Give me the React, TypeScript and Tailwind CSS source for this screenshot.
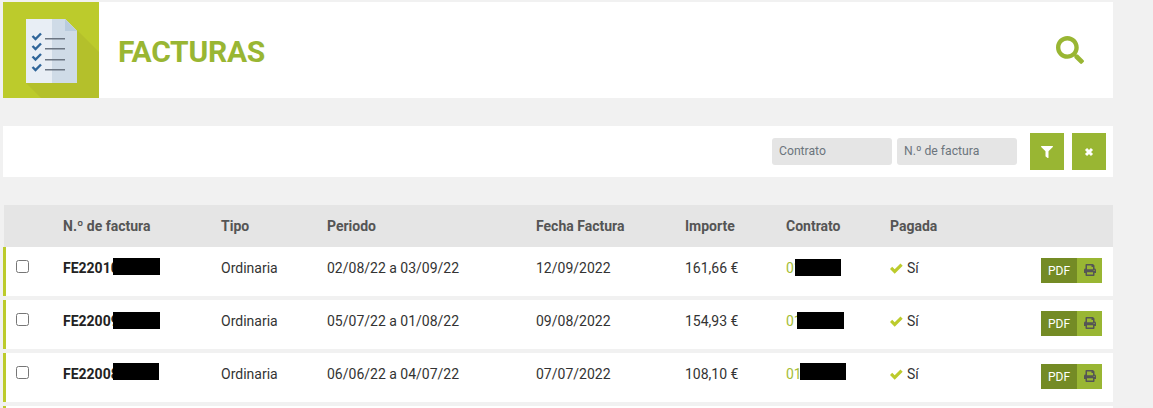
import { FaSearch, FaFilter, FaPrint } from "react-icons/fa";

interface Invoice {
  numero: string;
  periodo: string;
  fecha: string;
  importe: string;
  contrato: string;
  numeroTape: string;
  contratoTape: string;
}

const invoices: Invoice[] = [
  {
    numero: "FE22010",
    periodo: "02/08/22 a 03/09/22",
    fecha: "12/09/2022",
    importe: "161,66 €",
    contrato: "01",
    numeroTape: "left-[107px] top-[11px] h-[17px] w-[47px]",
    contratoTape: "left-[789px] top-[12px] h-[17px] w-[46px]",
  },
  {
    numero: "FE22009",
    periodo: "05/07/22 a 01/08/22",
    fecha: "09/08/2022",
    importe: "154,93 €",
    contrato: "01",
    numeroTape: "left-[107px] top-[12px] h-[17px] w-[47px]",
    contratoTape: "left-[791px] top-[12px] h-[17px] w-[47px]",
  },
  {
    numero: "FE22008",
    periodo: "06/06/22 a 04/07/22",
    fecha: "07/07/2022",
    importe: "108,10 €",
    contrato: "01",
    numeroTape: "left-[107px] top-[10px] h-[17px] w-[46px]",
    contratoTape: "left-[794px] top-[10px] h-[17px] w-[46px]",
  },
];

const checkRows = [
  { check: 37, line: 36 },
  { check: 47, line: 46 },
  { check: 57.5, line: 57 },
  { check: 68, line: 67 },
];

function DocIcon() {
  return (
    <svg width="96" height="96" viewBox="0 0 96 96" className="block">
      <rect width="96" height="96" fill="#bccb2c" />
      <path d="M74 28 L96 50 V96 H38 L23 81 Z" fill="#b4c02b" />
      <path d="M23 17 H62 L74 29 V81 H23 Z" fill="#e8eef5" />
      <path d="M49 17 H62 L74 29 V81 H49 Z" fill="#cfdbe7" />
      <path d="M62 17 L74 29 H62 Z" fill="#b9cbdd" />
      {checkRows.map((row) => (
        <g key={row.line}>
          <path
            d="M0 -3 L3 0 L8.5 -5.5"
            transform={`translate(29.5 ${row.check})`}
            fill="none"
            stroke="#2f6599"
            strokeWidth="2.4"
          />
          <rect x="42" y={row.line} width="20" height="1.5" fill="#6b7582" />
        </g>
      ))}
    </svg>
  );
}

function InvoiceRow({ invoice }: { invoice: Invoice }) {
  return (
    <div className="relative flex h-[49px] items-start border-l-[3px] border-[#bccb2c] bg-white text-sm text-[#333333]">
      <div className="w-[57px] pl-[10px] pt-[13px]">
        <input type="checkbox" className="block h-[13px] w-[13px]" />
      </div>
      <div className="w-[158px] pt-[11px] font-bold text-[#222222]">{invoice.numero}</div>
      <div className="w-[106px] pt-[11px]">Ordinaria</div>
      <div className="w-[209px] pt-[11px]">{invoice.periodo}</div>
      <div className="w-[149px] pt-[11px]">{invoice.fecha}</div>
      <div className="w-[101px] pt-[11px]">{invoice.importe}</div>
      <div className="w-[104px] pt-[11px] text-[#a5bd35]">{invoice.contrato}</div>
      <div className="flex w-[151px] items-center gap-[4px] pt-[11px]">
        <svg width="13" height="11" viewBox="0 0 13 11" className="text-[#bccb2c]">
          <path d="M0 6 L2.2 3.8 L4.7 6.3 L10.5 0.5 L12.7 2.7 L4.7 10.7 Z" fill="currentColor" />
        </svg>
        <span>Sí</span>
      </div>
      <div className="mt-[11px] flex h-[25px] w-[61px] text-xs text-white">
        <span className="flex w-[36px] items-center justify-center bg-[#748b25]">PDF</span>
        <span className="flex w-[25px] items-center justify-center bg-[#99b633] pb-[1px] text-[#555555]">
          <FaPrint className="text-xs" />
        </span>
      </div>
      <div className={`absolute bg-black ${invoice.numeroTape}`} />
      <div className={`absolute bg-black ${invoice.contratoTape}`} />
    </div>
  );
}

export default function App() {
  return (
    <div className="h-[408px] overflow-hidden bg-[#f1f1f1] pl-[3px] pt-[2px] font-['Roboto',sans-serif]">
      <div className="flex h-[96px] w-[1110px] items-center bg-white pr-[29px]">
        <DocIcon />
        <h1 className="ml-[19px] mt-[3px] flex-1 text-[30px] font-bold tracking-[-0.25px] text-[#99b633]">FACTURAS</h1>
        <FaSearch className="text-[28px] text-[#99b633]" />
      </div>

      <div className="mt-[28px] flex h-[51px] w-[1110px] items-center justify-end bg-white pr-[7px]">
        <div className="flex h-[27px] w-[120px] items-center rounded-[3px] bg-[#e5e5e5] px-[7px] text-[12.2px] text-[#6c757d]">
          Contrato
        </div>
        <div className="ml-[5px] flex h-[27px] w-[120px] items-center rounded-[3px] bg-[#e5e5e5] px-[7px] text-[12.2px] text-[#6c757d]">
          N.º de factura
        </div>
        <button className="ml-[13px] flex h-[37px] w-[34px] items-center justify-center bg-[#99b633] text-xs text-white">
          <FaFilter />
        </button>
        <button className="ml-[8px] flex h-[37px] w-[34px] items-center justify-center bg-[#99b633] text-white">
          <svg width="10" height="10" viewBox="0 0 10 10">
            <path d="M2 2 L8 8 M8 2 L2 8" stroke="currentColor" strokeWidth="3" />
          </svg>
        </button>
      </div>

      <div className="mt-[28px] w-[1110px]">
        <div className="ml-[1px] flex h-[42px] items-center bg-[#e5e5e5] text-sm font-bold text-[#555555]">
          <div className="w-[59px]" />
          <div className="w-[158px]">N.º de factura</div>
          <div className="w-[106px]">Tipo</div>
          <div className="w-[209px]">Periodo</div>
          <div className="w-[149px]">Fecha Factura</div>
          <div className="w-[101px]">Importe</div>
          <div className="w-[104px]">Contrato</div>
          <div>Pagada</div>
        </div>
        <div className="flex flex-col gap-[4px]">
          {invoices.map((invoice) => (
            <InvoiceRow key={invoice.fecha} invoice={invoice} />
          ))}
          <div className="h-[49px] border-l-[3px] border-[#bccb2c] bg-white" />
        </div>
      </div>
    </div>
  );
}
